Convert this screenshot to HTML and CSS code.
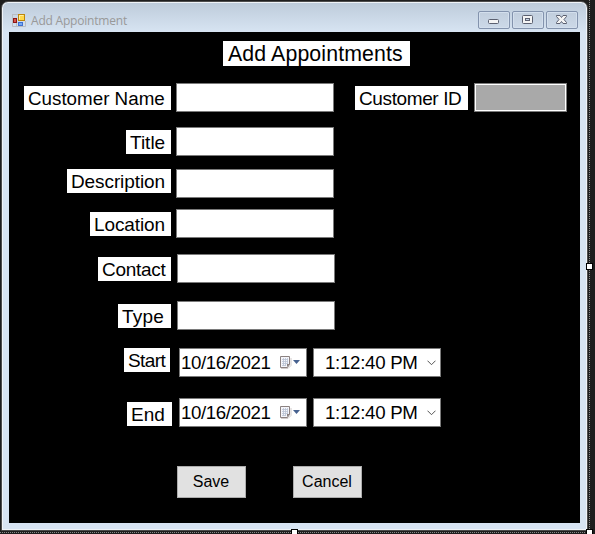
FILE: index.html
```html
<!DOCTYPE html>
<html lang="en">
<head>
<meta charset="utf-8">
<title>Add Appointment</title>
<link rel="stylesheet" href="styles.css">
</head>
<body>
<main class="designer">
  <section class="window">
    <header class="titlebar">
      <svg class="app-icon" width="14" height="14" viewBox="0 0 14 14">
        <path d="M.5 1.500H6M.5 1v12.500h13V8M.5 9.500h5M4.500 10v3.500" fill="none" stroke="#b9bdc2"/>
        <rect x="6.500" y="1.500" width="6" height="6" fill="#ffd84a" stroke="#bd860b"/>
        <path d="M7.500 6.500v-4h4" fill="none" stroke="#fff0a0"/>
        <rect x="1.500" y="5.500" width="3" height="4" fill="#d7544a" stroke="#8e1712"/>
        <rect x="6.500" y="9.500" width="4" height="3" fill="#76aaf2" stroke="#3f70d2"/>
      </svg>
      <span class="caption">Add Appointment</span>
      <div class="controls">
        <span class="control"><svg width="30" height="16" viewBox="0 0 30 16"><rect x="9.500" y="7.500" width="10" height="4" rx="1" fill="#f4f4f4" stroke="#5b6070"/></svg></span>
        <span class="control"><svg width="30" height="16" viewBox="0 0 30 16"><rect x="9.500" y="3.500" width="10" height="8" rx="1" fill="#f4f4f4" stroke="#5b6070"/><rect x="12.500" y="6.500" width="4" height="2" fill="#c7d4e4" stroke="#5b6070"/></svg></span>
        <span class="control"><svg width="30" height="16" viewBox="0 0 30 16"><path d="M9.500 3.500h3.500l1.500 2 1.500-2h3.500v1l-2.500 3 2.500 3v1H16l-1.500-2-1.500 2H9.500v-1l2.500-3-2.500-3z" fill="#f4f4f4" stroke="#5b6070"/></svg></span>
      </div>
    </header>
    <form class="client">
      <h1 class="tag heading"><span>Add Appointments</span></h1>
      <div class="row name-row">
        <label class="tag customer">Customer Name</label><span class="field"></span>
        <label class="tag customer-id">Customer ID</label><span class="field readonly"></span>
      </div>
      <div class="row title-row"><label class="tag">Title</label><span class="field"></span></div>
      <div class="row description-row"><label class="tag">Description</label><span class="field"></span></div>
      <div class="row location-row"><label class="tag">Location</label><span class="field"></span></div>
      <div class="row contact-row"><label class="tag">Contact</label><span class="field"></span></div>
      <div class="row type-row"><label class="tag">Type</label><span class="field"></span></div>
      <div class="row start-row">
        <label class="tag">Start</label>
        <span class="picker date"><span>10/16/2021</span><svg width="22" height="15" viewBox="0 0 22 15"><path d="M2 13.500h7l3-3V3" fill="none" stroke="#d2cccb"/><path d="M1.500 1.500h9v8l-2 3h-7z" fill="#f5f5fa" stroke="#8b8180"/><path d="M3 4.500h6M3 6.500h6M3 8.500h6M3 10.500h4M4.500 3v8M6.500 3v8M8.500 3v6" stroke="#b9c2d2" stroke-width=".8"/><path d="M8 12v-3h3z" fill="#8b8180"/><path d="M14 5h7l-3.500 4z" fill="#46618f"/></svg></span>
        <span class="picker time"><span>1:12:40 PM</span><svg width="9" height="6" viewBox="0 0 9 6"><path d="M.5.700l4 4 4-4" fill="none" stroke="#555"/></svg></span>
      </div>
      <div class="row end-row">
        <label class="tag">End</label>
        <span class="picker date"><span>10/16/2021</span><svg width="22" height="15" viewBox="0 0 22 15"><path d="M2 13.500h7l3-3V3" fill="none" stroke="#d2cccb"/><path d="M1.500 1.500h9v8l-2 3h-7z" fill="#f5f5fa" stroke="#8b8180"/><path d="M3 4.500h6M3 6.500h6M3 8.500h6M3 10.500h4M4.500 3v8M6.500 3v8M8.500 3v6" stroke="#b9c2d2" stroke-width=".8"/><path d="M8 12v-3h3z" fill="#8b8180"/><path d="M14 5h7l-3.500 4z" fill="#46618f"/></svg></span>
        <span class="picker time"><span>1:12:40 PM</span><svg width="9" height="6" viewBox="0 0 9 6"><path d="M.5.700l4 4 4-4" fill="none" stroke="#555"/></svg></span>
      </div>
      <div class="actions"><button type="button">Save</button><button type="button">Cancel</button></div>
    </form>
  </section>
  <i class="guide right"></i><i class="guide bottom"></i>
  <i class="handle east"></i><i class="handle south"></i><i class="handle corner"></i>
</main>
</body>
</html>
```

FILE: styles.css
```css
* { box-sizing: border-box; }
body { margin: 0; background: #1e1e1e; font-family: "Liberation Sans", Arial, sans-serif; color: #000; }
.designer { position: relative; width: 595px; height: 534px; padding: 1px 0 0 1px; overflow: hidden; }
.window {
  width: 587px; height: 530px; padding: 0 6px;
  border: 1px solid #4d4d4d; border-radius: 7px 7px 0 0;
  box-shadow: inset 0 0 0 1px #f0f4f8;
  background: linear-gradient(#bdcbda, #d7e4f2 30px, #d7e4f2);
}
.titlebar { display: flex; height: 30px; padding: 9px 3px 0 4px; }
.app-icon { flex: none; margin-top: 2px; }
.caption { margin-left: 5px; font: 12px/19px "Open Sans", sans-serif; letter-spacing: -.2px; color: #999; white-space: nowrap; }
.controls { display: flex; gap: 2px; margin-left: auto; }
.control {
  width: 32px; height: 18px; border: 1px solid #8393ad; border-radius: 2px;
  box-shadow: inset 0 0 0 1px #d3dfed; background: linear-gradient(#c1cedd, #ccd9e8);
}
.control svg { display: block; }
.client { width: 571px; height: 491px; margin-left: 1px; padding-top: 9px; background: #000; }
.tag {
  display: block; flex: none; height: 24px; padding: 0 6px 0 4px; background: #fff;
  font-size: 19px; line-height: 25px; font-weight: 400; white-space: nowrap;
}
.heading { width: 187px; height: 25px; margin: 0 0 17px 214px; padding-left: 5px; font-size: 21.300px; line-height: 26px; letter-spacing: .12px; }
.row { display: grid; grid-template-columns: 162px 158px; column-gap: 5px; height: 29px; align-items: start; }
.row > .tag { justify-self: end; margin-top: 3px; }
.field { height: 29px; background: #fff; border: 1px solid #7a7a7a; }
.name-row { grid-template-columns: 162px 158px 129px 93px; }
.name-row > .customer { width: 147px; font-size: 18.800px; }
.name-row > .customer-id { width: 113px; letter-spacing: -.38px; }
.field.readonly { margin-left: 1px; width: 93px; background: #a9a9a9; box-shadow: inset 0 0 0 1px #fff; }
.title-row { margin-top: 15px; }
.description-row { margin-top: 13px; }
.location-row { margin-top: 11px; }
.contact-row { margin-top: 16px; column-gap: 6px; }
.type-row { margin-top: 18px; column-gap: 6px; }
.title-row .tag { width: 45px; }
.description-row .tag { width: 104px; margin-top: 0; letter-spacing: -.1px; }
.location-row .tag { width: 81px; letter-spacing: -.1px; }
.contact-row .tag { width: 73px; letter-spacing: -.3px; }
.type-row .tag { width: 53px; letter-spacing: .2px; }
.start-row, .end-row { display: flex; column-gap: 0; }
.start-row { margin-top: 18px; }
.start-row .tag { width: 46px; margin: 0 9px 0 115px; letter-spacing: -.6px; }
.end-row { margin-top: 21px; }
.end-row .tag { width: 45px; margin: 4px 7px 0 118px; }
.picker {
  display: flex; align-items: center; justify-content: space-between;
  width: 128px; height: 29px; border: 1px solid #7a7a7a; background: #fff; font-size: 18.700px; white-space: nowrap;
}
.date { padding: 0 5px 0 1px; letter-spacing: -.4px; }
.time { margin-left: 6px; padding: 0 4px 0 11px; letter-spacing: -.3px; }
.actions { display: flex; gap: 47px; margin: 39px 0 0 168px; }
.actions button {
  width: 69px; height: 32px; padding: 0 1px 0 0; border: 1px solid #adadad; border-radius: 0;
  background: #e1e1e1; color: #000; font: 16px/30px "Liberation Sans", Arial, sans-serif;
}
.guide { position: absolute; }
.right { left: 589px; top: 0; width: 1px; height: 534px; background: repeating-linear-gradient(#888 0 1px, #1e1e1e 1px 2px); }
.bottom { left: 0; top: 532px; width: 590px; height: 1px; background: repeating-linear-gradient(90deg, #888 0 1px, #1e1e1e 1px 2px); }
.handle { position: absolute; width: 7px; height: 7px; border: 1px solid #000; background: #fff; }
.east { left: 586px; top: 263px; }
.south { left: 291px; top: 529px; }
.corner { left: 586px; top: 529px; }
```
